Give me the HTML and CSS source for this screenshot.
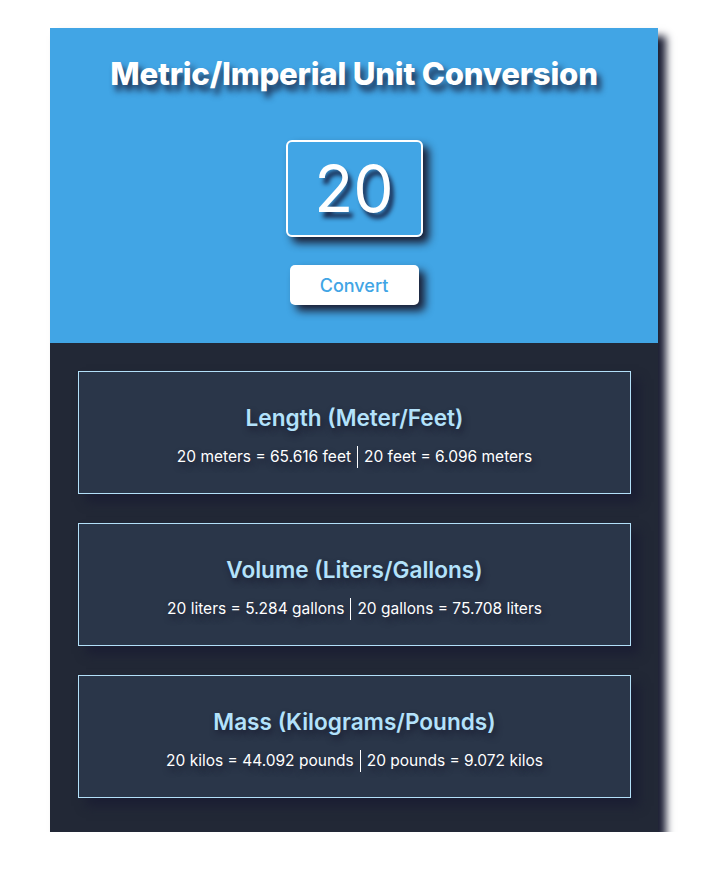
FILE: index.html
```html
<!DOCTYPE html>
<html>
<head>
<meta charset="utf-8">
<link rel="stylesheet" href="styles.css">
</head>
<body>
<main class="app">
  <section class="top">
    <h1 class="title">Metric/Imperial Unit Conversion</h1>
    <div class="input-box">20</div>
    <button class="convert">Convert</button>
  </section>
  <section class="results">
    <div class="card">
      <h2 class="card-title">Length (Meter/Feet)</h2>
      <p class="card-text">20 meters = 65.616 feet <span class="sep"></span> 20 feet = 6.096 meters</p>
    </div>
    <div class="card">
      <h2 class="card-title">Volume (Liters/Gallons)</h2>
      <p class="card-text">20 liters = 5.284 gallons <span class="sep"></span> 20 gallons = 75.708 liters</p>
    </div>
    <div class="card">
      <h2 class="card-title">Mass (Kilograms/Pounds)</h2>
      <p class="card-text">20 kilos = 44.092 pounds <span class="sep"></span> 20 pounds = 9.072 kilos</p>
    </div>
  </section>
</main>
</body>
</html>
```
FILE: styles.css
```css
* { box-sizing: border-box; }
body {
  margin: 0;
  padding: 28px 0 0 50px;
  background: #ffffff;
  font-family: Inter, "Noto Sans", sans-serif;
}
.app {
  width: 608px;
  box-shadow: 8px 8px 8px #1b1e33;
}
.top {
  background: #41a5e5;
  height: 315px;
  display: flex;
  flex-direction: column;
  align-items: center;
  padding-top: 28px;
}
.title {
  margin: 0;
  color: #fff;
  font-size: 31.2px;
  font-weight: 800;
  letter-spacing: -0.2px;
  line-height: 36px;
  text-shadow: 4px 6px 6px #1b2a4a;
}
.input-box {
  margin-top: 48px;
  width: 137px;
  height: 97px;
  border: 2px solid #fff;
  border-radius: 6px;
  color: #fff;
  font-size: 64px;
  font-weight: 400;
  line-height: 1;
  display: flex;
  align-items: center;
  justify-content: center;
  text-shadow: 4px 6px 4px #1b2f55;
  box-shadow: 6px 6px 8px #1b1e33;
}
.convert {
  margin-top: 28px;
  width: 129px;
  height: 40px;
  border: none;
  border-radius: 5px;
  background: #fff;
  color: #41a5e5;
  font-family: Inter, "Noto Sans", sans-serif;
  font-size: 18px;
  font-weight: 500;
  box-shadow: 6px 6px 8px #1b1e33;
}
.results {
  background: #222836;
  padding: 28px 27px 34px 28px;
  display: flex;
  flex-direction: column;
  gap: 29px;
}
.card {
  height: 123px;
  background: #2a3649;
  border: 1px solid #b3e0f9;
  display: flex;
  flex-direction: column;
  align-items: center;
  justify-content: center;
  box-shadow: 8px 8px 10px #1b1e33;
  padding-top: 8px;
}
.card-title {
  margin: 0;
  color: #b3e2fb;
  font-size: 22.6px;
  font-weight: 600;
  line-height: 26px;
  text-shadow: 2px 4px 6px #1b1e33;
}
.card-text {
  margin: 15px 0 0;
  color: #fff;
  font-size: 15.5px;
  line-height: 20px;
  display: flex;
  align-items: center;
  gap: 6px;
  text-shadow: 2px 4px 6px #1b1e33;
}
.sep {
  display: inline-block;
  width: 1px;
  height: 22px;
  background: #fff;
}
```
